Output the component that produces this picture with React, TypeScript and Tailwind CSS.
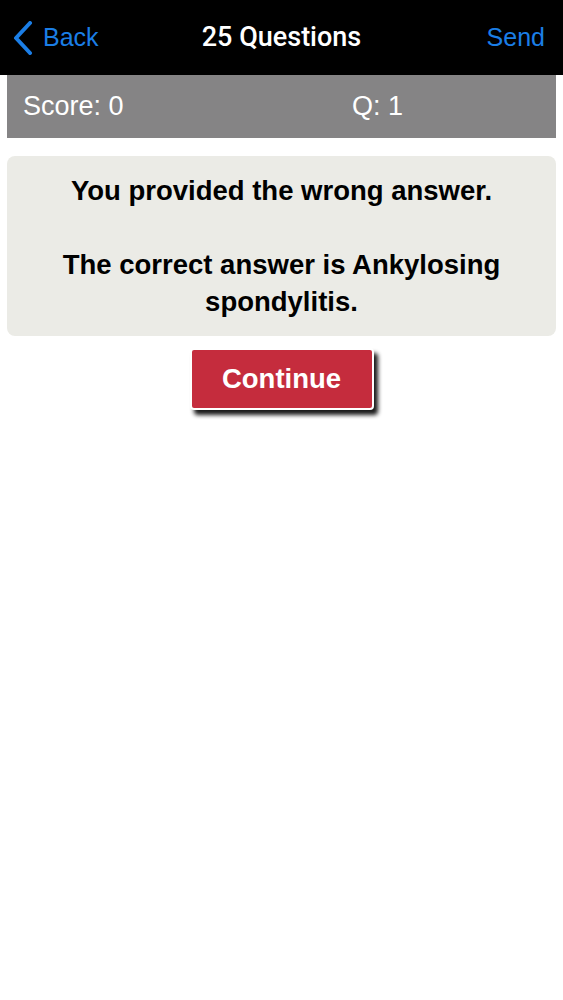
export default function App() {
  return (
    <div className="min-h-screen bg-white" style={{ fontFamily: '"Liberation Sans", Arial, sans-serif' }}>
      <div className="relative flex h-[75px] items-center justify-between bg-black px-[13px]">
        <div className="flex items-center gap-[10px] text-[#1b7ee6]">
          <svg width="20" height="34" viewBox="0 0 20 34" fill="none">
            <path d="M17 2 L3 17 L17 32" stroke="#1b7ee6" strokeWidth="4" strokeLinecap="round" strokeLinejoin="round" />
          </svg>
          <span className="text-[25px] leading-none">Back</span>
        </div>
        <span className="absolute left-1/2 -translate-x-1/2 text-[27px] font-medium leading-none text-white" style={{ fontFamily: 'Roboto, "Liberation Sans", sans-serif' }}>
          25 Questions
        </span>
        <span className="pr-[5px] text-[25px] leading-none text-[#1b7ee6]">Send</span>
      </div>
      <div className="mx-[7px] flex h-[63px] items-center bg-[#858485] text-[27px] text-white">
        <span className="w-[345px] pl-[16px]">Score: 0</span>
        <span>Q: 1</span>
      </div>
      <div className="mx-[7px] mt-[18px] flex h-[180px] flex-col items-center justify-center rounded-[8px] bg-[#ebebe6] px-4 text-center text-[27.5px] font-bold leading-[37px] text-black">
        <p>You provided the wrong answer.</p>
        <p className="mt-[37px] w-[470px]">The correct answer is Ankylosing spondylitis.</p>
      </div>
      <div className="mt-[12px] flex justify-center">
        <button
          type="button"
          className="h-[62px] w-[184px] rounded-[4px] border-2 border-white bg-[#c52c3d] text-[27.5px] font-bold text-white shadow-[4px_5px_4px_rgba(0,0,0,0.9)]"
        >
          Continue
        </button>
      </div>
    </div>
  );
}
